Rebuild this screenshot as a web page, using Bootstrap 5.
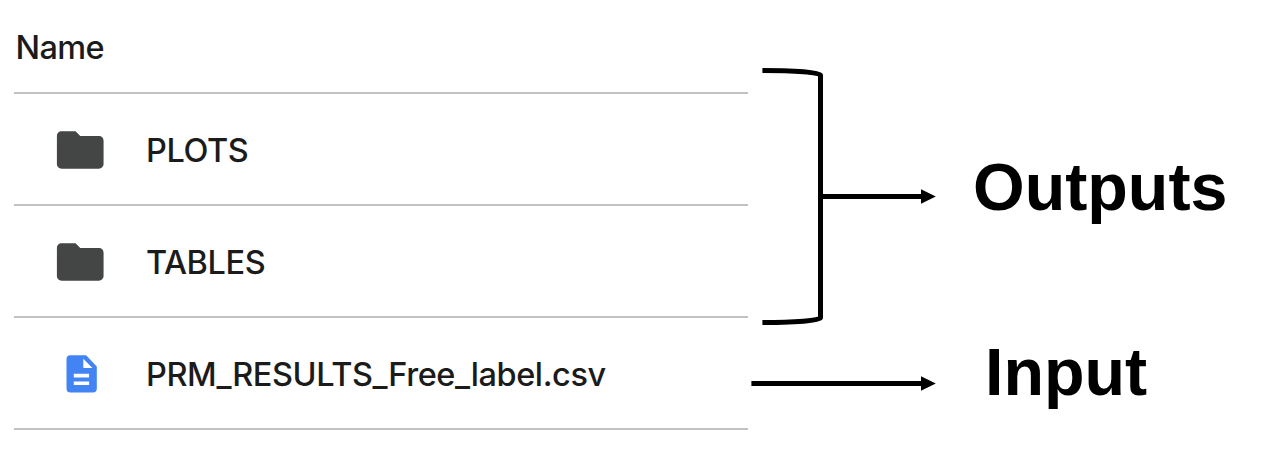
<!DOCTYPE html>
<html lang="en">
<head>
<meta charset="utf-8">
<meta name="viewport" content="width=device-width, initial-scale=1">
<title>Files</title>
<link href="https://cdn.jsdelivr.net/npm/bootstrap@5.3.0/dist/css/bootstrap.min.css" rel="stylesheet">
<style>
body{background:#fff;height:450px}
.files{width:734px;margin-left:14px;font:500 32.5px/40px Inter,"Liberation Sans",sans-serif;color:#1b1b1b}
.files-head,.file-row{border-bottom:2px solid #c2c2c2}
.files-head{height:94px;padding:28px 0 0 1.5px;letter-spacing:-.6px}
.file-row{height:112px;padding:2px 0 0 38px}
.file-icon{width:56px;height:56px;margin-right:38px}
.file-name{white-space:nowrap;letter-spacing:-.42px;padding-top:2px}
.links{width:202px;height:450px}
.notes{font:700 66.4px/76px "Liberation Sans",Arial,sans-serif;color:#000;padding:149px 0 0 23px}
.note-in{margin:109px 0 0 12px}
</style>
</head>
<body class="overflow-hidden">
<main class="d-flex align-items-start">
  <section class="files flex-shrink-0">
    <div class="files-head">Name</div>
    <div class="file-row d-flex align-items-center">
      <svg class="file-icon" viewBox="-.1 0 24 24" fill="#444645"><path d="M10 4H4c-1.1 0-2 .9-2 2v12c0 1.1.9 2 2 2h16c1.1 0 2-.9 2-2V8c0-1.1-.9-2-2-2h-8l-2-2z"/></svg>
      <span class="file-name">PLOTS</span>
    </div>
    <div class="file-row d-flex align-items-center">
      <svg class="file-icon" viewBox="-.1 0 24 24" fill="#444645"><path d="M10 4H4c-1.1 0-2 .9-2 2v12c0 1.1.9 2 2 2h16c1.1 0 2-.9 2-2V8c0-1.1-.9-2-2-2h-8l-2-2z"/></svg>
      <span class="file-name">TABLES</span>
    </div>
    <div class="file-row d-flex align-items-center">
      <svg class="file-icon" viewBox="-.3 -.1 56 56"><path fill="#4384f4" fill-rule="evenodd" d="M18.1 9.2H33.8L44.5 20.5V42.5Q44.5 46.4 40.6 46.4H18.1Q14.2 46.4 14.2 42.5V13.1Q14.2 9.2 18.1 9.2ZM31 12.7V22H40.1ZM21.5 27.6V31.5H36.8V27.6ZM21.5 35.3V39H36.8V35.3Z"/></svg>
      <span class="file-name">PRM_RESULTS_Free_label.csv</span>
    </div>
  </section>
  <svg class="links flex-shrink-0" viewBox="748 0 202 450">
    <g fill="none" stroke="#000" stroke-width="5">
      <path d="M762.4 70.5C794.5 70.5 820.5 72.4 820.5 75V318C820.5 320.5 794.5 322.5 762.4 322.5M820.5 196.5H922M751.4 383.5H922"/>
    </g>
    <path d="M921 189.2L935.8 196.5L921 203.8ZM921 376.2L935.8 383.5L921 390.8Z"/>
  </svg>
  <section class="notes">
    <div>Outputs</div>
    <div class="note-in">Input</div>
  </section>
</main>
<script src="https://cdn.jsdelivr.net/npm/bootstrap@5.3.0/dist/js/bootstrap.bundle.min.js"></script>
</body>
</html>
